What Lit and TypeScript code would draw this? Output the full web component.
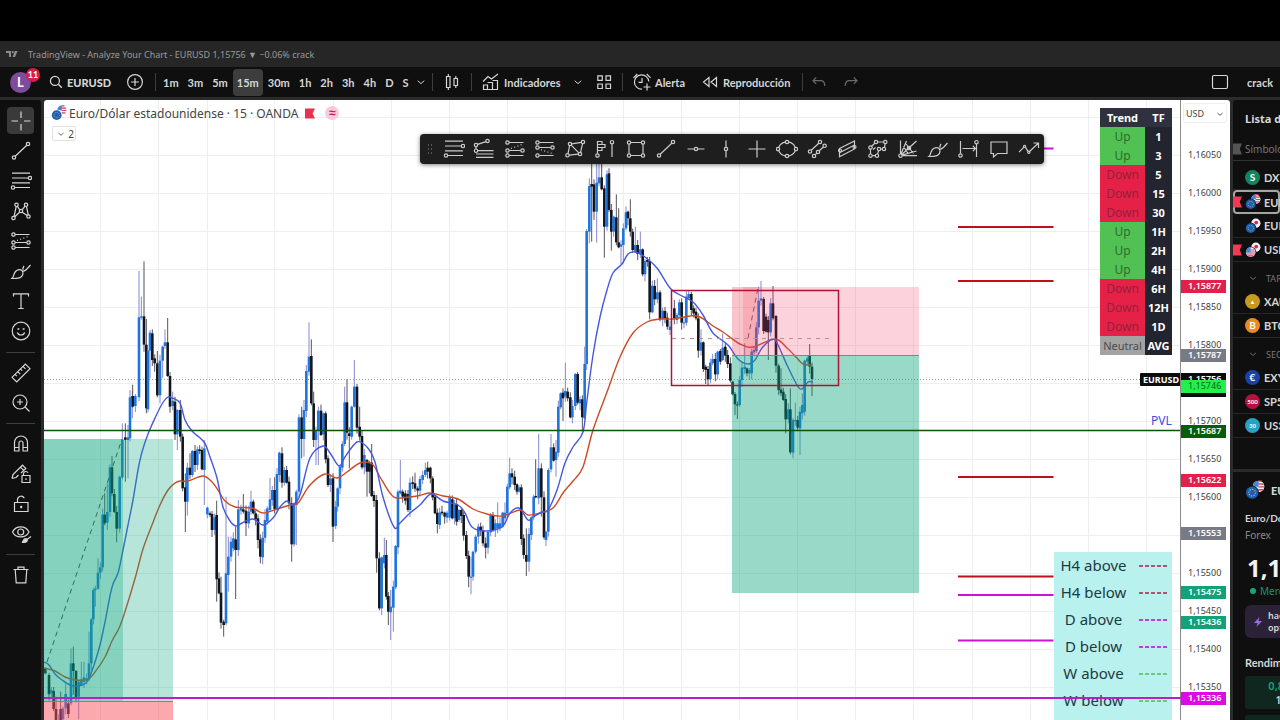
import { LitElement, html, svg, css } from "lit";
import { customElement } from "lit/decorators.js";
import { classMap } from "lit/directives/class-map.js";

/* ---------- icons, drawn on a 22px grid ---------- */

const dot = (x: number, y: number, r = 1.7) => svg`<circle cx=${x} cy=${y} r=${r}></circle>`;
const line = (d: string) => svg`<path d=${d}></path>`;

const glyphs: Record<string, unknown> = {
  cross: svg`${line("M11 1.5V8M11 14v6.5M1.5 11H8M14 11h6.5")}`,
  trend: svg`${line("M5.2 16.3 16.8 5.2")}${dot(4, 17.5)}${dot(18, 4)}`,
  fib: svg`${line("M2 3.2H20M2 8H18.3M2 12.8H20M4.7 17.5H20")}${dot(20, 8)}${dot(3, 17.5)}`,
  fibExt: svg`${line("M3 8.7V11M4.6 6.4 12.9 3.6M4.7 12.7H20.5M3 16H20.5M3 19.3H20.5")}${dot(3, 7)}${dot(3, 12.7)}${dot(14.5, 3)}`,
  longPos: svg`${line("M5.2 4.5H19.5M5.2 12.5H16.8M5.2 17.5H19.5")}<path d="M7 10.5 18 6.5" stroke-dasharray="1 2.4"></path>${dot(3.5, 4.5)}${dot(3.5, 12.5)}${dot(3.5, 17.5)}${dot(18.5, 12.5)}`,
  shortPos: svg`${line("M5.2 4.5H19.5M5.2 9.5H16.8M5.2 17.5H19.5")}<path d="M7 11.8 18 15.4" stroke-dasharray="1 2.4"></path>${dot(3.5, 4.5)}${dot(3.5, 9.5)}${dot(3.5, 17.5)}${dot(18.5, 9.5)}`,
  xabcd: svg`${line("M4.1 16.3 6.2 6.5M7.2 6.2 9.6 9.6M12.2 12.2 17.2 15.6M12.3 9.6 15 6.2M16.4 6.4 18.3 14.9M9.5 12.3 4.8 16.8")}${dot(3.5, 18)}${dot(6.5, 4.8)}${dot(16, 4.8)}${dot(18.5, 16.5)}${dot(11, 11)}`,
  poly: svg`${line("M7.7 5.8 17.3 4.3M18.6 5.7 16.5 14.4M14.3 16.2 5.2 17.2M4 15.6 5.6 7.7M7.2 7.2 14.8 14.8")}${dot(6, 6)}${dot(19, 4)}${dot(16, 16)}${dot(3.5, 17.3)}`,
  volume: svg`${line("M3.5 15.7V3.5H8V6.5H11V9.5H8V12.5H3.5M3.5 6.5H8M3.5 9.5H8M18 6V19")}${dot(3.5, 17.5)}${dot(18, 4.2)}`,
  rect: svg`${line("M5.7 4.5H16.3M5.7 17.5H16.3M4 6.2V15.8M18 6.2V15.8")}${dot(4, 4.5)}${dot(18, 4.5)}${dot(4, 17.5)}${dot(18, 17.5)}`,
  hline: svg`${line("M2.5 11H9.3M12.7 11H19.5")}${dot(11, 11)}`,
  vline: svg`${line("M11 2.5V9.3M11 12.7V19.5")}${dot(11, 11)}`,
  plus: svg`${line("M11 2.5V19.5M2.5 11H19.5")}`,
  ellipse: svg`${line("M2.5 9.5C4 6.5 6.5 4.5 9.2 4.1M12.8 4.1C15.5 4.5 18 6.5 19.5 9.5M2.5 12.5C4 15.5 6.5 17.5 9.2 17.9M12.8 17.9C15.5 17.5 18 15.5 19.5 12.5")}${dot(11, 4)}${dot(11, 18)}${dot(2, 11)}${dot(20, 11)}`,
  parallel: svg`${line("M5.2 12.3 12.8 5.2M9.2 16.8 10.8 15.2M13.2 12.8 17.5 9")}${dot(14, 4)}${dot(4, 13.5)}${dot(8, 18)}${dot(12, 14)}${dot(18.6, 7.8)}`,
  channel: svg`${line("M3.5 10.5 18.5 3 18.5 11 3.5 18.7ZM3.5 14.7 18.5 7")}${dot(18.5, 9, 1.5)}${dot(4, 12.5, 1.5)}`,
  path: svg`${line("M3.5 16V11.2M4.6 8.2 7.8 5.2M10.7 4H16.6M18.2 5.7 17.4 9.4M15.3 11H13.7M11.6 12.7 10.6 16M8.3 17.7H5.2M6 11.5 8.5 9.5")}${dot(3.5, 9.5)}${dot(9, 4)}${dot(18.3, 4)}${dot(17, 11)}${dot(12, 11)}${dot(10, 17.7)}${dot(3.5, 17.7)}`,
  gann: svg`${line("M3.5 16V2.5M5.2 17.7H20M4.7 16.5 19.5 3M5 17.2 19.5 13M4 16 9.5 3M6.5 8.5 11 15.5M9 6 16.5 15.5")}${dot(3.5, 17.7)}${dot(12, 10)}`,
  brush: svg`${line("M2 18.5C4 17 3 14.5 5.5 11.5 7.5 9.2 10.6 9 12 10.6 13.6 12.5 13.2 15.2 11 17 8.8 18.8 5 18.5 2 18.5ZM12.5 10.8C14 12 16 10.5 20.5 5M13 9.7C12.8 8 13.2 7 14 5.8")}`,
  range: svg`${line("M3.5 3V15.7M5.5 10.5H18.5M15.8 7.8 18.5 10.5 15.8 13.2M19.5 6V19")}${dot(3.5, 17.5)}${dot(19.5, 4.2)}`,
  note: svg`${line("M3 4H19V15.5H9.5L5.5 19V15.5H3Z")}`,
  zigzag: svg`${line("M1 14.2 6 9.2M7.5 9.4 10 13.4M11.8 13.2 20.5 5M15.5 5H20.5V10")}${dot(6.6, 8.4, 1.1)}${dot(10.8, 14.2, 1.1)}`,
  text: svg`${line("M3.5 6.5V3.8H18.5V6.5M11 3.8V18.5M8.3 18.5H13.7")}`,
  smile: svg`<circle cx="11" cy="11" r="8.8"></circle><path d="M7.3 12.5C8.5 15.8 13.5 15.8 14.7 12.5"></path><path d="M8.4 8.3V9.7M13.6 8.3V9.7" stroke-width="1.9"></path>`,
  ruler: svg`${line("M2 15.3 15.3 2 20 6.7 6.7 20ZM5 12.3 6.8 14.1M7.7 9.6 10.2 12.1M10.4 6.9 12.2 8.7M13 4.3 15.5 6.8")}`,
  zoom: svg`<circle cx="10" cy="10" r="7"></circle>${line("M15 15 19.5 19.5M10 7V13M7 10H13")}`,
  magnet: svg`${line("M4.5 18V9.5A6.5 6.5 0 0 1 17.5 9.5V18H13V10A2 2 0 0 0 9 10V18ZM4.5 14.5H9M13 14.5H17.5")}`,
  pencilLock: svg`${line("M2 15.5 3 11.5 12.5 2.2 15.8 5.4 11 10M2 15.5 6 14.5 8.5 12M10.5 4.2 13.6 7.3M12 12.5H20V19.5H12ZM13.5 12.5V10.5A2.4 2.4 0 0 1 18 9.8M16 15.2V17")}`,
  lock: svg`${line("M4.5 9.5H18V18.5H4.5ZM7.5 9.5V6.5A3.6 3.6 0 0 1 14.3 5.2")}<path d="M11.2 12.8V15.2" stroke-width="2"></path>`,
  eye: svg`${line("M2.5 9C6 2.2 15.5 2.2 19 9 15.5 15.6 6 15.6 2.5 9Z")}<circle cx="10.7" cy="9" r="3"></circle><path d="M12 19.5C13.5 18.8 13 16.5 15 15.8 17.5 15.2 18 18 16 19 15 19.6 13.5 19.5 12 19.5ZM17 16.5 21 13.5" fill="currentColor"></path>`,
  trash: svg`${line("M3.5 5.5H18.5M8 5.5V3.2H14V5.5M5.2 5.5 6.2 18.8H15.8L16.8 5.5")}`,
  search: svg`<path d="M14.2 14.2 19 19" stroke-width="2"></path><circle cx="9.5" cy="9.5" r="6.2" stroke-width="1.7"></circle>`,
  add: svg`<circle cx="11" cy="11" r="7.4"></circle>${line("M11 7V15M7 11H15")}`,
  chevron: svg`${line("M7 9.5 11 13 15 9.5")}`,
  candles: svg`${line("M5.5 5.5H9V16.5H5.5ZM7.3 3V5.5M7.3 16.5V19M13 7.5H16.5V14.5H13ZM14.8 5V7.5M14.8 14.5V17")}`,
  indicators: svg`${line("M3.5 14H7.5V18.5H3.5ZM7.5 11.5H12.5V18.5H7.5M12.5 9.5H17.5V18.5H12.5M3 10.5 8 5.5 11.5 8 18 3")}`,
  layout: svg`${line("M4.8 4.8H9.3V9.3H4.8ZM13 4.8H17.5V9.3H13ZM4.8 13H9.3V17.5H4.8ZM13 13H17.5V17.5H13Z")}`,
  alarm: svg`${line("M17.8 10.5A7.2 7.2 0 1 0 11 18.2M11 7V11.3H7.5M2.5 6.8 6.3 3M15.7 3 19.5 6.8M16 12.5V19.5M12.5 16H19.5")}`,
  rewind: svg`${line("M10 6.5V15.5L4.5 11ZM17.5 6.5V15.5L12 11Z")}`,
  undo: svg`${line("M8.2 6.5 5 9.7 8.2 12.9M5 9.7H12.5C15.3 9.7 16.8 11.5 16.8 15")}`,
  redo: svg`${line("M13.8 6.5 17 9.7 13.8 12.9M17 9.7H9.5C6.7 9.7 5.2 11.5 5.2 15")}`,
  window: svg`<rect x="3.5" y="4.5" width="15" height="13" rx="1.5"></rect>`,
};

const icon = (name: string) => html`<svg class="icon" viewBox="0 0 22 22" aria-hidden="true">${glyphs[name]}</svg>`;

const pair = (kind: "us" | "jp" | "usjp") => html`<svg class="pair" viewBox="0 0 18 18" aria-hidden="true">
  ${kind === "us"
    ? svg`<circle cx="12.2" cy="5.8" r="5.2" fill="#f1f1f6"></circle><path d="M12 1h3.2M12 3.6h5M12 6.2h5.2M12 8.8h4.4" stroke="#e2405a" stroke-width="1.3"></path><path d="M12.2.6V6H7A5.2 5.2 0 0 1 12.2.6Z" fill="#4a83d0"></path>`
    : svg`<circle cx="12.2" cy="5.8" r="5.2" fill="#f4f1f4"></circle><circle cx="12.6" cy="5.2" r="2.1" fill="#e2244e"></circle>`}
  <circle class="cut" cx="6.4" cy="11.4" r="6.2"></circle>
  ${kind === "usjp"
    ? svg`<circle cx="6.4" cy="11.4" r="5.4" fill="#eef"></circle><path d="M2 13.5h9M3.4 15.6h6M6.4 9h4M6.4 11.3h5.2" stroke="#e2405a" stroke-width="1.2"></path><path d="M6.4 6V12H1A5.4 5.4 0 0 1 6.4 6Z" fill="#4a83d0"></path>`
    : svg`<circle cx="6.4" cy="11.4" r="5.5" fill="#1d5fb4"></circle><circle cx="6.4" cy="11.4" r="3" fill="none" stroke="#b9c97a" stroke-width="1" stroke-dasharray="1 1.3"></circle>`}
</svg>`;

/* ---------- chart data ---------- */

interface Candle { x: number; up: boolean; top: number; bottom: number; high: number; low: number; }

/* One session of candles. Each entry is "time, b|k, body top, body bottom, high, low",
   in thirds of a pixel from the session's origin; 0 or a missing wick means a short one. */
const session = (x0: number, y0: number, rows: string): Candle[] =>
  rows.trim().split(/\s+/).map((row, i) => {
    const m = /^(\d+)([bk])(.+)$/.exec(row)!;
    const [top, bottom, high, low] = m[3].split(",").map(Number);
    const y = (v: number) => y0 + v / 3;
    return {
      x: x0 + Number(m[1]) / 3,
      up: m[2] === "b",
      top: y(top),
      bottom: y(bottom),
      high: high ? y(high) : y(top) - 1 - ((i * 7) % 6),
      low: low ? y(low) : y(bottom) + 1 + ((i * 5) % 7),
    };
  });

const candles: Candle[] = [
  ...session(0, 350, `136k955,970 147k975,1033 154b1020,1030 161k1023,1077 168k1077,1110,1040 176b1110,1112 182k1077,1110,1025
    189b1075,1108 197b1032,1075,1000 205k1060,1092 213b940,1060,895 220k940,963,890,1035 228k963,1042 236b995,1040,0,1108
    244b988,1005,935 252b982,996,935 260b985,992 267b940,988,845 274b808,940 280b720,808 286b716,720,0,770 294b668,716,625
    301b652,668 308b494,652 314k494,520,430 322b486,518,400 330b352,486 336k352,430,318 343k432,486 350k486,536,0,577
    359b380,536 367b270,382,220 376k262,270,220,395 384b262,270,225,385 390b142,265,120 397b140,144,0,205`),
  ...session(130, 240, `8k468,500,434 16b468,498 27b232,472,93 34b229,233,170 42k229,314,64 49k314,505,237 54b332,508
    60b278,332,270,415 67k280,360,268 74k355,370,0,395 82k370,466,333 90b362,466,0,490 98b320,362,0,415 105b307,318,268
    113k307,408,234 120k408,500 128b482,498,455 135k485,583,470,600 142b510,583,0,630 151k510,590,480 158k590,745
    166k742,785,700,876 172b683,785,0,827 180k683,705,640 187b633,705 195k633,675,615 202b628,675 209k628,633 216k630,688,620
    223b625,690,600,795 232b803,823 240k820,825 246k822,870 254b832,870 260k825,1018,782,1085 267k1015,1060 273k1058,1148,1010
    281k1145,1155,0,1190 288b1000,1150,770 295b950,1005,890,1055 303b905,950 310b895,925 317k898,930,860,1077 325b808,930,780
    333b803,812 340k808,815,762 348k812,850,0,888 356b815,850 363b785,815,752 370k785,820 377k820,838 384k835,900,0,925
    391k898,950,0,970 398b893,952 405b840,893,808 412b805,845 420b778,810,714 427b750,780 434k750,808,712 441b702,808
    448b638,705 456k640,728,622 463b690,728 470k690,728 477k725,790 485k790,913,0,965 492b790,913,0,920 499b755,795,0,915
    507b532,755 515k532,597,500,655 522b510,597,480,650 529b393,513 537b350,395,247 544k348,490,298 551k490,600,455
    558b572,600,0,675 565b512,572,500,675 573k512,585 580b520,583 587k520,658 594k655,735 601b715,735 609k715,860,0,906
    617b800,858 623b745,800,0,815 630b680,745 637b612,683 644b487,612,440 651k487,578,418 658k580,588,0,685 665b500,590
    673b440,500,360 681k440,563,432 689k560,590,500 696k588,682 703b645,682 711k660,695,0,770 718k668,695,0,760
    725k668,768,612 732k765,783 740k780,955,0,998 748k955,1105 755b952,1105,0,1125 763b945,970,893 769k945,1070,900
    775k1068,1115,0,1155 782b1100,1117,1050,1200 790b1040,1103,0,1175 797b918,1042 804b755,922`),
  ...session(390, 360, `31b392,400,300 38k395,410 46k400,422 54k402,450 60b368,450 68k367,372 75k370,386,338 83k385,392,0,418
    90b357,392 98b345,360 106b330,345,308 113k323,335 121k323,355 128k355,412 135k410,460 142k458,492,0,520 149b458,495
    156k455,460 164k458,470 171b458,473 179b412,473 187k418,475 194b435,475 200k432,485 207b450,480 214k450,468 221k465,527
    229k525,588 236k587,650,0,682 243b650,652,590,703 249b575,650 257b530,575 265b500,530 272k500,513 279k512,550
    287k550,563,0,595 294b515,563 302b465,517 309k465,510 316b490,510 323b490,505,427 330b490,505 338b458,500 345b458,475,427
    352b380,460 359b340,382,293 366k340,352 374k350,375 381k373,395 387b382,395 394k382,537 401k535,585 409k585,605,505,648
    417b522,605,0,635 424b472,525 431b410,472 437k408,412,298 446b325,415,222 454k325,412,0,470 462k412,532 468b515,540,0,558
    475b330,515 483b262,328,222 491k262,302 498b275,300,240,350 505b140,278 512b100,142 519k98,115,85,183 526b93,110,8
    533k95,115 541k112,172 547b138,172 556b42,138 563k42,128 570b118,130 577k118,172,0,215`),
  ...session(540, 160, `134b612,775,560 140b213,612 148b78,215,55,250 155k72,80,10,245 162k73,155,0,180 170b68,155,5,248
    177b52,70,5 185k52,88,5 193k85,200,0,293 201b43,200 207k40,150 214k150,215,0,272 221b170,215 229k172,247,103
    236k247,262,145 243b253,260,0,312 250b205,255,0,310 258b157,205 264k155,175 271k175,215,118 278k215,270
    286b255,275,200 293k255,282 301b268,282,215 308k268,343 315b303,343 322k300,305 329k303,457,0,478 337b377,457
    344k378,418 352b397,418,355 360k397,478 368b452,478 375k453,475 382k473,500 390b500,510,0,525 403k445,475,420
    411b465,480 418b427,465 425k427,488 432b487,490 439b410,488 446b402,415,393 454k402,450 461k445,460 468k455,475
    475k475,572 483b547,572,508 490k547,627 497k620,630,0,672 504k627,658 511b608,658 518b597,610 526k597,643 533b575,643
    541k573,605 548b563,600,520 556k560,587 563k585,612 571k610,662`),
  ...session(660, 270, `218k335,373 225k372,403,0,435 232k403,405,0,447 239b330,405 246b293,330 254b290,297,220 261k295,310
    268b300,310,0,330 275b245,310 282b240,247 289b172,243 296b92,172,50 303b85,92,33 311k87,183 318k140,185
    325k150,187,0,270 332b100,187 339k100,145,48 348k138,287 356k287,360 363k358,370,295 370k365,390 377k387,448,0,490
    385b418,448 391k418,547,355 399b450,548,0,565 406b450,452,398 413k450,473 420b425,475,0,555 427b405,430,370 434b272,425
    442b265,275 449k258,290,222 456k290,327,0,378`),
];

type Point = [number, number];
const points = (text: string): Point[] => text.trim().split(/\s+/).map((p) => p.split(",").map(Number) as Point);

/* Catmull-Rom spline through the points of a moving average */
const curve = (p: Point[]): string => {
  let d = `M${p[0]}`;
  for (let i = 0; i < p.length - 1; i++) {
    const a = p[i - 1] ?? p[i], b = p[i], c = p[i + 1], e = p[i + 2] ?? c;
    d += `C${b[0] + (c[0] - a[0]) / 6},${b[1] + (c[1] - a[1]) / 6} ${c[0] - (e[0] - b[0]) / 6},${c[1] - (e[1] - b[1]) / 6} ${c}`;
  }
  return d;
};

const fastAverage = curve(points(`44,662 49,665 55,674 62,680 70,685 78,686 86,683 90,676 95,662 100,645 105,622 110,596
  113,584 118,573 122,555 128,525 133,500 138,470 142,452 148,434 155,418 162,404 168,397 172,398 180,403 185,420 192,431
  204,442 210,457 217,478 223,507 230,521 236,526 242,523 253,519 263,525 273,518 280,507 287,501 293,505 300,495 310,458
  323,446 330,453 339,466 345,457 357,442 367,447 375,462 383,497 394,527 400,523 410,513 420,505 431,494 443,501 458,505
  465,513 472,527 485,531 502,527 510,513 519,508 528,520 533,517 542,512 548,510 557,490 565,463 573,447 583,432 587,400
  593,355 600,317 607,290 613,273 622,264 628,254 635,252 645,257 657,268 670,288 680,295 693,302 703,315 713,333 728,345
  738,359 748,364 755,360 762,348 773,339 778,345 787,365 797,385 802,389 808,382 813,382`));

const slowAverage = curve(points(`44,668 55,671 65,677 75,680 88,679 95,672 105,657 112,641 120,626 128,602 136,575 143,549
  152,525 160,505 168,490 175,483 180,481 188,481 203,476 212,482 218,490 225,501 235,507 252,508 263,513 277,509 290,505
  298,503 310,485 325,474 337,478 347,472 360,463 372,464 380,477 390,493 397,498 417,496 430,493 443,496 458,499 473,509
  487,514 502,516 520,510 528,515 540,513 553,508 563,493 573,481 583,467 593,430 607,392 620,357 633,333 647,322 660,319
  673,319 690,316 700,317 713,326 723,332 740,344 753,347 775,339 787,348 797,358 803,364 812,365`));

const columns = [100, 158, 207, 274, 333, 391, 449, 507, 565, 623, 681, 739, 797, 855, 913, 972, 1030, 1088, 1146];
const priceY = (price: number) => Math.round(155 + ((116050 - price) / 50) * 38);
const ticks = [116050, 116000, 115950, 115900, 115850, 115800, 115700, 115650, 115600, 115500, 115450, 115400, 115350];
const rows = Array.from({ length: 16 }, (_, i) => 117 + i * 38);
const format = (price: number) => `1,${String(price).slice(1)}`;

const tags: [number, string][] = [
  [115877, "#e2204a"], [115787, "#787a85"], [115687, "#075d0b"], [115622, "#e2204a"],
  [115553, "#787a85"], [115475, "#14a079"], [115436, "#14a079"], [115336, "#dc0be0"],
];

@customElement("price-chart")
class PriceChart extends LitElement {
  static styles = css`
    :host { display: flex; width: 100%; height: 100%; overflow: hidden; font-family: "Noto Sans", sans-serif; }
    .plot { flex: 1; min-width: 0; height: 100%; display: block; }
    .scale { flex: none; width: 49px; height: 100%; display: block; box-shadow: -1px 0 #8b8b8b; }
    .pvl { font-size: 12px; fill: #3a4fdc; }
    .symbol { font-size: 9px; font-weight: 700; fill: #fff; }
    .tick { font-size: 9px; fill: #3c3c3c; }
    .tag { font-size: 9px; font-weight: 600; fill: #fff; }
    .bid { font-size: 9px; fill: #0c5c1a; }
  `;

  private candle(c: Candle) {
    return svg`<rect x=${c.x - 0.5} y=${c.high} width="1" height=${c.low - c.high} fill=${c.up ? "#8589cf" : "#55555c"}></rect>
      <rect x=${c.x - 1.3} y=${c.top} width="2.6" height=${Math.max(1.2, c.bottom - c.top)} fill=${c.up ? "#1d74dc" : "#10151f"}></rect>`;
  }

  render() {
    return html`
      <svg class="plot" role="img" aria-label="EURUSD">
        <g transform="translate(-44 -100)">
          <g stroke="#eeeef0">
            ${columns.map((x) => svg`<path d="M${x + 0.5} 100V1200"></path>`)}
            ${rows.map((y) => svg`<path d="M44 ${y + 0.5}H3000"></path>`)}
          </g>
          <path d="M44 379.5H3000" stroke="#9b9b9b" stroke-dasharray="1 2"></path>
          ${candles.map((c) => this.candle(c))}
          <g fill="none" stroke-width="1.4">
            <path d=${slowAverage} stroke="#cc4b26"></path>
            <path d=${fastAverage} stroke="#4559dd"></path>
          </g>
          <g fill="#0aa57c">
            <rect x="44" y="439" width="129" height="262" opacity="0.29"></rect>
            <rect x="44" y="439" width="79" height="262" opacity="0.29"></rect>
            <rect x="732" y="355" width="187" height="238" opacity="0.42"></rect>
          </g>
          <rect x="44" y="702" width="129" height="400" fill="#f7525f" opacity="0.5"></rect>
          <path d="M44 701.5H173M732 355.5H919" stroke="#6e8f86"></path>
          <rect x="732" y="287" width="187" height="68" fill="#f23660" opacity="0.22"></rect>
          <rect x="732" y="287" width="26" height="68" fill="#e8404f" opacity="0.1"></rect>
          <rect x="743" y="287" width="15" height="68" fill="#e8404f" opacity="0.18"></rect>
          <g fill="none">
            <path d="M47 662 122 439" stroke="#2f7059" stroke-dasharray="5 4"></path>
            <path d="M748 338 758 288" stroke="#8a5560" stroke-dasharray="5 4"></path>
            <path d="M672 338.5H833" stroke="#c08c96" stroke-dasharray="4 5"></path>
            <rect x="671.5" y="290.5" width="167" height="95" stroke="#b01235" stroke-width="1.5"></rect>
            <path d="M44 430.5H3000" stroke="#0b520f" stroke-width="1.6"></path>
            <path d="M958 227H1053.5M958 281H1053.5M958 477H1053.5M958 576.5H1053.5" stroke="#bd0f1c" stroke-width="2"></path>
            <path d="M958 595H1053.5M958 640.5H1053.5M1040 148.5H1053.5" stroke="#cb13d3" stroke-width="2"></path>
          </g>
          <text class="pvl" x="1151" y="425">PVL</text>
          <rect x="1140" y="373" width="44" height="13" rx="1" fill="#0d0d0d"></rect>
          <text class="symbol" x="1143" y="383">EURUSD</text>
        </g>
      </svg>
      <svg class="scale" role="img" aria-label="USD">
        <g transform="translate(0 -100)">
          ${ticks.map((t) => svg`<text class="tick" x="7" y=${priceY(t) + 3}>${format(t)}</text>`)}
          ${tags.map(([p, fill]) => svg`<rect x="0" y=${priceY(p) - 6} width="45" height="13" fill=${fill}></rect>
            <text class="tag" x="7" y=${priceY(p) + 3}>${format(p)}</text>`)}
          <rect x="0" y="373" width="45" height="24" fill="#0d0d0d"></rect>
          <text class="tag" x="7" y="382">1,15756</text>
          <rect x="0" y="380" width="45" height="13" fill="#22f14c"></rect>
          <text class="bid" x="7" y="389">1,15746</text>
        </g>
      </svg>`;
  }
}

/* ---------- page ---------- */

const drawTools = ["fib", "fibExt", "longPos", "shortPos", "poly", "volume", "rect", "trend", "hline", "vline", "plus",
  "ellipse", "parallel", "channel", "path", "gann", "brush", "range", "note", "zigzag"];
const sideTools = [
  ["cross", "trend", "fib", "xabcd", "longPos", "brush", "text", "smile"],
  ["ruler", "zoom"],
  ["magnet", "pencilLock", "lock", "eye"],
  ["trash"],
];
const intervals = ["1m", "3m", "5m", "15m", "30m", "1h", "2h", "3h", "4h", "D", "S"];
const trends: [string, string][] = [["Up", "1"], ["Up", "3"], ["Down", "5"], ["Down", "15"], ["Down", "30"], ["Up", "1H"],
  ["Up", "2H"], ["Up", "4H"], ["Down", "6H"], ["Down", "12H"], ["Down", "1D"], ["Neutral", "AVG"]];
const legend: [string, string][] = [["H4 above", "red"], ["H4 below", "red"], ["D above", "violet"], ["D below", "violet"],
  ["W above", "lime"], ["W below", "lime"]];

@customElement("app-root")
class AppRoot extends LitElement {
  static styles = css`
    :host { display: flex; flex-direction: column; height: 100vh; overflow: hidden; background: #2b2b2b;
      font-family: "Noto Sans", sans-serif; color: #d6d6d6; }
    * { box-sizing: border-box; }
    button, select { font: inherit; color: inherit; background: none; border: 0; padding: 0; margin: 0; }
    button { display: flex; align-items: center; justify-content: center; white-space: nowrap; }
    .icon { width: 22px; height: 22px; flex: none; fill: none; stroke: currentColor; stroke-width: 1.2; }
    .pair { width: 16px; height: 16px; flex: none; }
    .cut { fill: #111; }
    .heading .cut { fill: #fff; }

    .strip { flex: none; height: 41px; background: #000; }
    .titlebar { flex: none; height: 26px; display: flex; align-items: center; gap: 10px; padding-left: 6px;
      background: #262626; color: #9a9a9a; font-size: 9px; white-space: nowrap; }
    .logo { width: 12px; height: 8px; fill: #8d8d8d; }

    .topbar { flex: none; height: 30px; display: flex; align-items: center; background: #0f0f0f;
      font-family: Lato, sans-serif; font-size: 11px; font-weight: 700; }
    .rule { flex: none; width: 1px; height: 18px; background: #3d3d3d; }
    .topbar > button { flex: none; }
    .account { position: relative; width: 48px; height: 28px; justify-content: flex-start; padding-left: 10px; }
    .avatar { width: 21px; height: 21px; border-radius: 50%; background: #7e4c9e; font-size: 13px; line-height: 21px; color: #fff; }
    .badge { position: absolute; left: 26px; top: 0; width: 14px; height: 14px; border-radius: 50%; background: #db1c46;
      color: #fff; font-size: 9px; line-height: 14px; }
    .symbol { width: 67px; gap: 3px; justify-content: flex-start; font-weight: 900; }
    .symbol .icon { width: 16px; height: 16px; }
    .add { width: 40px; }
    .intervals { flex: none; display: flex; align-items: center; width: 253px; padding-left: 3px; gap: 1px; }
    .intervals button { height: 27px; padding: 0 4px; border-radius: 4px; }
    .intervals button.active { background: #3d3d3d; }
    .more { width: 23px; }
    .more .icon, .drop .icon { width: 18px; height: 18px; }
    .style { width: 38px; }
    .indicators { width: 98px; gap: 2px; justify-content: flex-start; padding-left: 8px; }
    .drop { width: 16px; }
    .layout { width: 36px; }
    .alert { width: 70px; gap: 2px; justify-content: flex-start; padding-left: 8px; }
    .replay { width: 109px; gap: 2px; justify-content: flex-start; padding-left: 6px; }
    .step { width: 32px; color: #6a6a6a; }
    .spacer { flex: 1; }
    .window { width: 34px; }
    .preset { width: 43px; justify-content: flex-start; padding-left: 10px; }

    .main { flex: 1; min-height: 0; display: flex; gap: 3px; padding-top: 3px; }
    .side { flex: none; width: 41px; background: #0f0f0f; border-radius: 0 3px 0 0; padding-top: 7px; }
    .group { display: flex; flex-direction: column; align-items: center; gap: 3px; padding-bottom: 7px; margin: 0 6px 6px; border-bottom: 1px solid #3d3d3d; }
    .group:first-child { padding-bottom: 8px; }
    .group:last-child { border: 0; }
    .group button { width: 27px; height: 27px; border-radius: 4px; }
    .group button.active { background: #3a3a3a; }

    .chart { flex: 1; min-width: 0; position: relative; background: #fff; border-radius: 3px 3px 0 0; overflow: hidden; }
    .heading { position: absolute; left: 7px; top: 3px; height: 20px; display: flex; align-items: center; gap: 2px;
      padding-right: 6px; color: #444; font-size: 12px; white-space: nowrap; }
    .flagmark { width: 10px; height: 11px; margin: 0 8px 0 5px; fill: #e9304f; }
    .approx { width: 14px; height: 14px; border-radius: 50%; background: #fbc9dc; color: #c2186a; font-size: 12px; font-weight: 700; line-height: 13px; text-align: center; }
    .collapse { position: absolute; left: 8px; top: 26px; width: 24px; height: 15px; border: 1px solid #e2e2e2; border-radius: 2px;
      background: #fff; color: #444; font-size: 10px; }
    .collapse .icon { width: 14px; height: 14px; }
    .palette { position: absolute; left: 376px; top: 34px; width: 624px; height: 30px; display: flex; align-items: center;
      background: #1e1e1e; border-radius: 4px; box-shadow: 0 1px 4px rgba(0, 0, 0, 0.5); color: #cbcbcb; }
    .grip { flex: none; width: 7px; height: 12px; margin: 0 5px 0 7px; background: radial-gradient(circle, #555 0.8px, transparent 1px) 0 0 / 3px 4px; }
    .palette button { flex: 1; height: 28px; }

    .trend { position: absolute; right: 58px; top: 8px; width: 72px; border-collapse: collapse; table-layout: fixed;
      font-size: 12px; text-align: center; color: #fff; background: #22242f; }
    .trend th, .trend td { height: 19px; padding: 0; line-height: 19px; }
    .trend th { font-size: 11px; font-weight: 700; background: #2f313e; }
    .trend td { font-size: 11px; font-weight: 700; }
    .trend .state { width: 45px; font-weight: 400; }
    .trend tbody .state { font-size: 12px; }
    .trend thead .state { color: #fff; font-weight: 700; }
    .trend .Up { background: #52c153; color: #2c6e2d; }
    .trend .Down { background: #e52148; color: #96203a; }
    .trend tbody .Neutral { background: #a3a3a3; color: #4c4c4c; font-size: 11px; }

    .legend { position: absolute; right: 58px; top: 452px; width: 118px; height: 190px; margin: 0; padding: 0; list-style: none;
      background: #b9f1ef; color: #1d3a42; font-size: 15px; }
    .legend li { display: flex; align-items: center; height: 27px; }
    .legend span { width: 79px; line-height: 27px; padding-bottom: 1px; text-align: center; white-space: nowrap; }
    .legend i { width: 28px; height: 2px; margin-left: 6px; }
    .red { background: repeating-linear-gradient(90deg, #b5506e 0 4px, transparent 4px 6px); }
    .violet { background: repeating-linear-gradient(90deg, #bb3fd8 0 4px, transparent 4px 6px); }
    .lime { background: repeating-linear-gradient(90deg, #6ccb7a 0 4px, transparent 4px 6px); }
    .level { position: absolute; left: 0; right: 49px; top: 597px; height: 2px; background: #b91fc6; }
    .currency { position: absolute; right: 3px; top: 3px; width: 44px; height: 20px; padding-left: 2px; border: 1px solid #eee; border-radius: 3px;
      background: #fff; color: #444; font-size: 9px; appearance: none; }
    .caret { position: absolute; right: 3px; top: 7px; color: #222; pointer-events: none; }
    .caret .icon { width: 14px; height: 14px; display: block; }

    .watch { flex: none; width: 47px; display: flex; flex-direction: column; gap: 3px; overflow: hidden; white-space: nowrap; font-size: 11px; }
    .list { height: 369px; background: #0f0f0f; border-radius: 3px 0 0 0; overflow: hidden; }
    .list h2 { margin: 0; height: 38px; padding: 0 0 0 12px; font-size: 11px; font-weight: 700; line-height: 38px; }
    .colhead { display: flex; align-items: center; gap: 3px; height: 23px; border-bottom: 1px solid #333; color: #777; font-size: 10px; }
    .colhead .flag { fill: #555; }
    .rows { padding-top: 5px; }
    .flag { flex: none; width: 9px; height: 12px; fill: #f23a55; }
    .item { display: flex; align-items: center; height: 24px; border-bottom: 1px solid #262626; gap: 3px;
      font-family: Lato, sans-serif; font-weight: 700; }
    .blank { flex: none; width: 9px; }
    .item.current { border: 2px solid #a5a5a5; border-radius: 4px; }
    .item.current .flag { margin-left: -2px; }
    .coin { flex: none; width: 15px; height: 15px; margin-right: 1px; border-radius: 50%; color: #fff; font-size: 10px; font-weight: 700; line-height: 15px; text-align: center; }
    .coin.small { font-size: 6px; }
    .section { display: flex; align-items: center; gap: 5px; height: 24px; padding-left: 12px; margin-top: 4px; color: #777; font-size: 9px; }
    .section .icon { width: 16px; height: 16px; }
    .jade { background: #12855c; } .gold { background: #c79a1c; } .orange { background: #e88a26; }
    .navy { background: #1c3fa8; } .crimson { background: #b3123f; } .cyan { background: #24a3c4; }

    .detail { flex: 1; background: #0f0f0f; padding: 8px 0 0 12px; overflow: hidden; }
    .detail .name { display: flex; align-items: center; gap: 6px; height: 20px; font-family: Lato, sans-serif; font-weight: 900; }
    .detail .name .pair { width: 20px; height: 20px; }
    .detail p { margin: 0; }
    .desc { padding-top: 9px; font-family: Lato, sans-serif; font-size: 10px; line-height: 18px; font-weight: 700; }
    .kind { font-size: 10px; line-height: 17px; color: #8a8a8a; }
    .price { padding: 8px 0 0 2px; font-size: 24px; line-height: 32px; font-weight: 700; color: #f2f2f2; }
    .open { font-size: 10px; line-height: 14px; color: #16966b; display: flex; align-items: center; gap: 4px; padding-left: 5px; }
    .open i { flex: none; width: 6px; height: 6px; border-radius: 50%; background: #17a777; }
    .news { display: flex; align-items: center; gap: 6px; width: 200px; height: 33px; margin-top: 7px; padding-left: 9px; border-radius: 6px; background: #2b2238; font-size: 9px; font-weight: 600; line-height: 12px; }
    .news svg { width: 8px; height: 10px; fill: #9a6be0; }
    .detail h3 { margin: 0; padding-top: 15px; font-family: Lato, sans-serif; font-size: 11px; line-height: 20px; }
    .tile { width: 72px; height: 33px; margin-top: 3px; border-radius: 3px; background: #10271f; text-align: center; font-size: 10px; line-height: 14px; padding-top: 3px; font-weight: 600; }
    .tile b { display: block; color: #18a276; font-size: 11px; font-weight: 600; }
    .tile + .tile { margin-top: 6px; }
  `;

  private flag() {
    return html`<svg class="flag" viewBox="0 0 10 12" aria-hidden="true"><path d="M0 0H10L7.5 6 10 12H0Z"></path></svg>`;
  }

  private item(name: string, mark: unknown, flagged = false, current = false) {
    return html`<div class=${classMap({ item: true, current })}>
      ${flagged ? this.flag() : html`<span class="blank"></span>`}${mark}<span>${name}</span>
    </div>`;
  }

  private coin(letter: string, tone: string, small = false) {
    return html`<span class=${classMap({ coin: true, [tone]: true, small })}>${letter}</span>`;
  }

  render() {
    return html`
      <div class="strip"></div>
      <header class="titlebar">
        <svg class="logo" viewBox="0 0 12 8" aria-hidden="true"><path d="M0 1H5V7H3V3H0ZM8.7 1H11.5L9 7H6.6Z"></path><circle cx="6.7" cy="2.1" r="1.1"></circle></svg>
        <span>TradingView - Analyze Your Chart - EURUSD 1,15756 ▼ −0.06% crack</span>
      </header>

      <nav class="topbar">
        <button class="account"><span class="avatar">L</span><span class="badge">11</span></button>
        <button class="symbol">${icon("search")}EURUSD</button>
        <button class="add" aria-label="Comparar">${icon("add")}</button>
        <span class="rule"></span>
        <div class="intervals">
          ${intervals.map((t) => html`<button class=${classMap({ active: t === "15m" })}>${t}</button>`)}
        </div>
        <button class="more" aria-label="Intervalos">${icon("chevron")}</button>
        <span class="rule"></span>
        <button class="style" aria-label="Velas">${icon("candles")}</button>
        <span class="rule"></span>
        <button class="indicators">${icon("indicators")}Indicadores</button>
        <button class="drop" aria-label="Favoritos">${icon("chevron")}</button>
        <button class="layout" aria-label="Plantillas">${icon("layout")}</button>
        <span class="rule"></span>
        <button class="alert">${icon("alarm")}Alerta</button>
        <button class="replay">${icon("rewind")}Reproducción</button>
        <span class="rule"></span>
        <button class="step" aria-label="Deshacer">${icon("undo")}</button>
        <button class="step" aria-label="Rehacer">${icon("redo")}</button>
        <span class="spacer"></span>
        <button class="window" aria-label="Ventana">${icon("window")}</button>
        <button class="preset">crack</button>
      </nav>

      <div class="main">
        <aside class="side">
          ${sideTools.map((group) => html`<div class="group">
            ${group.map((name) => html`<button class=${classMap({ active: name === "cross" })} aria-label=${name}>${icon(name)}</button>`)}
          </div>`)}
        </aside>

        <section class="chart">
          <price-chart></price-chart>
          <div class="heading">
            ${pair("us")}<span>Euro/Dólar estadounidense · 15 · OANDA</span>
            <svg class="flagmark" viewBox="0 0 10 11" aria-hidden="true"><path d="M0 0.5H10L7.6 5.5 10 10.5H0Z"></path></svg>
            <span class="approx">≈</span>
          </div>
          <button class="collapse">${icon("chevron")}2</button>

          <table class="trend">
            <thead><tr><th class="state">Trend</th><th>TF</th></tr></thead>
            <tbody>${trends.map(([state, tf]) => html`<tr><td class="state ${state}">${state}</td><td>${tf}</td></tr>`)}</tbody>
          </table>

          <ul class="legend">
            ${legend.map(([name, tone]) => html`<li><span>${name}</span><i class=${tone}></i></li>`)}
          </ul>
          <div class="level"></div>

          <div class="palette">
            <span class="grip"></span>
            ${drawTools.map((name) => html`<button aria-label=${name}>${icon(name)}</button>`)}
          </div>

          <select class="currency" aria-label="Divisa"><option>USD</option></select>
          <span class="caret">${icon("chevron")}</span>
        </section>

        <aside class="watch">
          <div class="list">
            <h2>Lista de</h2>
            <div class="colhead">${this.flag()}<span>Símbolo</span></div>
            <div class="rows">
              ${this.item("DXY", this.coin("S", "jade"))}
              ${this.item("EURUSD", pair("us"), true, true)}
              ${this.item("EURJPY", pair("jp"))}
              ${this.item("USDJPY", pair("usjp"), true)}
            </div>
            <div class="section">${icon("chevron")}TAR</div>
            ${this.item("XAUUSD", this.coin("▲", "gold", true))}
            ${this.item("BTCUSD", this.coin("B", "orange"))}
            <div class="section">${icon("chevron")}SEC</div>
            ${this.item("EXY", this.coin("€", "navy"))}
            ${this.item("SP500", this.coin("500", "crimson", true))}
            ${this.item("US30", this.coin("30", "cyan", true))}
          </div>
          <div class="detail">
            <div class="name">${pair("us")}EURUSD</div>
            <p class="desc">Euro/Dólar</p>
            <p class="kind">Forex</p>
            <p class="price">1,15</p>
            <p class="open"><i></i>Mercado</p>
            <div class="news"><svg viewBox="0 0 8 10" aria-hidden="true"><path d="M5.5 0 0 6H3.5L2.5 10 8 4H4.5Z"></path></svg><span>hace<br>opt</span></div>
            <h3>Rendimiento</h3>
            <div class="tile"><b>0,8%</b>1S</div>
            <div class="tile"></div>
          </div>
        </aside>
      </div>`;
  }
}
